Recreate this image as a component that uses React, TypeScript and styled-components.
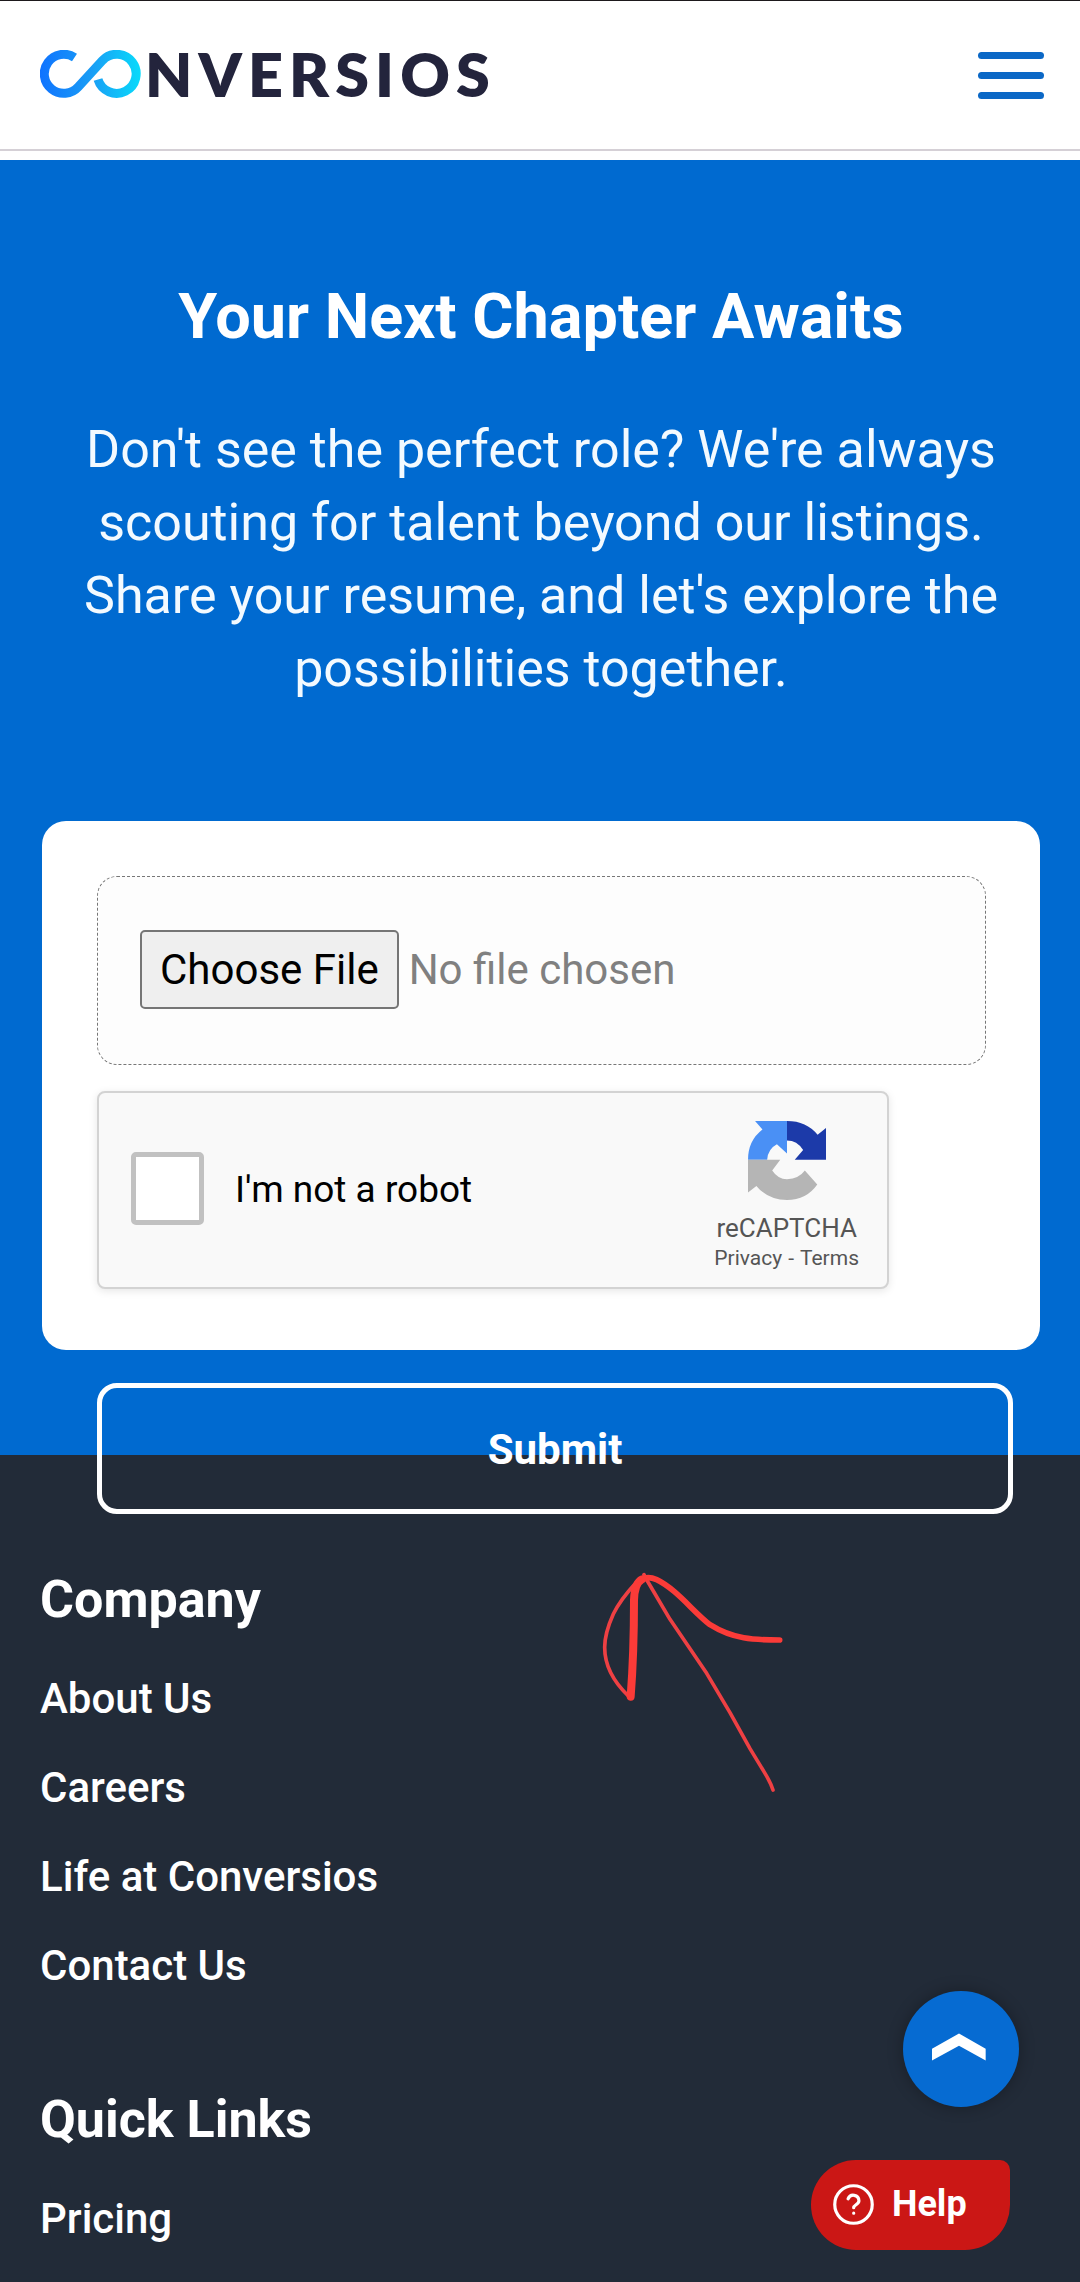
import React from "react";
import styled, { createGlobalStyle } from "styled-components";

const blue = "#006ad0";
const navy = "#222b38";

const GlobalStyle = createGlobalStyle`
  *, *::before, *::after { box-sizing: border-box; }
  body { margin: 0; background: #fff; font-family: Roboto, "Liberation Sans", sans-serif; }
  h2, h3, p, ul { margin: 0; padding: 0; }
  a { color: inherit; text-decoration: none; }
  button { font-family: inherit; cursor: pointer; }
`;

const Page = styled.div`
  position: relative;
  display: flex;
  flex-direction: column;
  min-height: 100vh;
`;

const Header = styled.header`
  display: flex;
  align-items: center;
  justify-content: space-between;
  height: 151px;
  margin-bottom: 9px;
  padding: 0 36px 0 40px;
  border-top: 1px solid #1d191c;
  border-bottom: 2px solid #d5d0d6;
`;

const Logo = styled.a`
  display: flex;
  align-items: center;
  gap: 3px;
  color: #23243c;
  font: 800 61px/64px Lato, sans-serif;
  letter-spacing: 0.1em;
`;

const LogoText = styled.span`
  padding-bottom: 2px;
`;

const MenuButton = styled.button`
  display: grid;
  gap: 13px;
  width: 66px;
  padding: 0;
  border: 0;
  background: none;
`;

const MenuBar = styled.span`
  height: 7px;
  border-radius: 4px;
  background: #0b68c6;
`;

const Hero = styled.main`
  padding: 117px 40px 0 42px;
  background: ${blue};
`;

const HeroTitle = styled.h2`
  color: #fff;
  font-size: 63px;
  font-weight: 700;
  line-height: 80px;
  text-align: center;
`;

const HeroText = styled.p`
  margin: 56px 30px 116px;
  color: #f3faff;
  font-size: 52px;
  line-height: 73px;
  text-align: center;
`;

const Card = styled.div`
  padding: 55px 54px 61px 55px;
  border-radius: 24px;
  background: #fff;
`;

const FileBox = styled.label`
  display: flex;
  align-items: center;
  height: 189px;
  margin-bottom: 26px;
  padding: 0 42px 2px;
  border: 1px dashed #777;
  border-radius: 20px;
  background: #fdfdfd;
`;

const FileInput = styled.input`
  width: 100%;
  color: #808080;
  font: 400 42px/48px Roboto, sans-serif;

  &::file-selector-button {
    height: 79px;
    margin: 0 10px 0 0;
    padding: 0 18px;
    border: 2px solid #757575;
    border-radius: 5px;
    background: #efefef;
    color: #000;
    font: inherit;
  }
`;

const Captcha = styled.div`
  display: flex;
  align-items: center;
  justify-content: space-between;
  max-width: 792px;
  height: 198px;
  padding: 0 28px 0 32px;
  border: 2px solid #d3d3d3;
  border-radius: 8px;
  background: #f9f9f9;
  box-shadow: 0 2px 8px rgba(0, 0, 0, 0.1);
`;

const RobotLabel = styled.label`
  display: flex;
  align-items: center;
  gap: 31px;
  padding-bottom: 3px;
  color: #000;
  font-size: 37px;
  line-height: 40px;
`;

const RobotCheck = styled.input`
  appearance: none;
  width: 73px;
  height: 73px;
  margin: 0;
  border: 5px solid #c1c1c1;
  border-radius: 5px;
  background: #fff;

  &:checked { background: #4a90f5; }
`;

const RobotText = styled.span`
  padding-top: 3px;
`;

const Brand = styled.div`
  display: flex;
  flex-direction: column;
  align-items: center;
  padding-top: 13px;
  color: #555;
`;

const BrandName = styled.span`
  margin-top: 12px;
  font-size: 26px;
  line-height: 32px;
`;

const BrandLinks = styled.span`
  display: flex;
  gap: 6px;
  font-size: 21px;
  line-height: 28px;
`;

const Submit = styled.button`
  position: relative;
  z-index: 1;
  display: block;
  width: calc(100% - 82px);
  height: 131px;
  margin: 33px 27px -59px 55px;
  padding: 2px 0 0;
  border: 5px solid #fff;
  border-radius: 20px;
  background: transparent;
  color: #fff;
  font-size: 42px;
  font-weight: 700;
`;

const Footer = styled.footer`
  position: relative;
  display: flex;
  flex: 1;
  flex-direction: column;
  gap: 98px;
  padding: 113px 40px 38px;
  background: ${navy};
  color: #fff;
`;

const FooterTitle = styled.h3`
  margin-bottom: 43px;
  font-size: 52px;
  font-weight: 700;
  line-height: 64px;
`;

const LinkList = styled.ul`
  display: grid;
  gap: 41px;
  list-style: none;
  font-size: 42px;
  font-weight: 500;
  line-height: 48px;
`;

const Sketch = styled.svg`
  position: absolute;
  top: 85px;
  left: 560px;
  pointer-events: none;
`;

const TopButton = styled.button`
  position: fixed;
  right: 61px;
  bottom: 175px;
  display: grid;
  place-items: center;
  width: 116px;
  height: 116px;
  padding: 0 4px 4px 0;
  border: 0;
  border-radius: 50%;
  background: #066bd2;
  box-shadow: 0 0 16px rgba(0, 0, 0, 0.3);
`;

const HelpButton = styled.button`
  position: fixed;
  right: 70px;
  bottom: 32px;
  display: flex;
  align-items: center;
  gap: 16px;
  width: 199px;
  height: 90px;
  padding: 0 0 2px 20px;
  border: 0;
  border-radius: 45px 10px 45px 45px;
  background: #cb1715;
  color: #fff;
  font-size: 36px;
  font-weight: 700;
  line-height: 40px;
`;

const sections = [
  { title: "Company", links: ["About Us", "Careers", "Life at Conversios", "Contact Us"] },
  { title: "Quick Links", links: ["Pricing"] },
];

const InfinityMark = () => (
  <svg width="102" height="50" viewBox="0 0 102 50" fill="none" aria-hidden="true">
    <defs>
      <linearGradient id="mark" x1="0" y1="0" x2="102" y2="0" gradientUnits="userSpaceOnUse">
        <stop stopColor="#0f73ff" />
        <stop offset="0.5" stopColor="#1a9df5" />
        <stop offset="1" stopColor="#08dcfb" />
      </linearGradient>
    </defs>
    <path
      d="M34.5 7.5A19.5 19.5 0 1 0 38.4 36.7L62.6 10.3A19.5 19.5 0 1 1 58 29.5"
      stroke="url(#mark)"
      strokeWidth="9"
    />
  </svg>
);

const CaptchaMark = () => (
  <svg width="78" height="79" viewBox="256 157 232 235" aria-hidden="true">
    <path fill="#4a90f5" d="M372 157H277L299 182Q256 215 256 272H313Q315 240 342 226L372 254Z" />
    <path fill="#1c3aa9" d="M372 157Q430 157 463 198L488 178V272H395L420 243Q402 215 372 215Z" />
    <path
      fill="#b5b5b5"
      d="M256 272H352L328 304Q345 330 372 330Q408 328 425 304L462 346Q430 392 372 392Q315 392 281 350L256 370Z"
    />
  </svg>
);

export default function App() {
  return (
    <Page>
      <GlobalStyle />
      <Header>
        <Logo href="#" aria-label="Conversios">
          <InfinityMark />
          <LogoText>NVERSIOS</LogoText>
        </Logo>
        <MenuButton type="button" aria-label="Menu">
          <MenuBar />
          <MenuBar />
          <MenuBar />
        </MenuButton>
      </Header>

      <Hero>
        <HeroTitle>Your Next Chapter Awaits</HeroTitle>
        <HeroText>
          Don't see the perfect role? We're always scouting for talent beyond our listings. Share
          your resume, and let's explore the possibilities together.
        </HeroText>
        <form onSubmit={(event) => event.preventDefault()}>
          <Card>
            <FileBox htmlFor="resume">
              <FileInput id="resume" type="file" aria-label="Resume" />
            </FileBox>
            <Captcha>
              <RobotLabel htmlFor="robot">
                <RobotCheck id="robot" type="checkbox" />
                <RobotText>I'm not a robot</RobotText>
              </RobotLabel>
              <Brand>
                <CaptchaMark />
                <BrandName>reCAPTCHA</BrandName>
                <BrandLinks>
                  <a href="#privacy">Privacy</a>
                  <span>-</span>
                  <a href="#terms">Terms</a>
                </BrandLinks>
              </Brand>
            </Captcha>
          </Card>
          <Submit type="submit">Submit</Submit>
        </form>
      </Hero>

      <Footer>
        {sections.map((section) => (
          <nav key={section.title} aria-label={section.title}>
            <FooterTitle>{section.title}</FooterTitle>
            <LinkList>
              {section.links.map((link) => (
                <li key={link}>
                  <a href="#">{link}</a>
                </li>
              ))}
            </LinkList>
          </nav>
        ))}
        <Sketch
          width="280"
          height="280"
          viewBox="0 0 840 840"
          fill="none"
          stroke="#fb3b38"
          strokeLinecap="round"
          strokeLinejoin="round"
          aria-hidden="true"
        >
          <path stroke="#ee4043" strokeWidth="11" d="M252 104L264 126L330 238L440 400L510 518L570 626L615 700Q632 728 639 750" />
          <path stroke="#ee4043" strokeWidth="11" d="M228 128Q180 180 160 222Q134 280 134 322Q134 400 205 468" />
          <path strokeWidth="24" d="M212 470Q222 340 222 180Q224 128 246 118" />
          <path strokeWidth="17" d="M240 120Q262 106 290 119C350 148 400 216 450 254C520 298 580 300 659 300" />
        </Sketch>
      </Footer>

      <TopButton type="button" aria-label="Back to top">
        <svg width="54" height="28" viewBox="456 220 160 82" aria-hidden="true">
          <path fill="#fff" d="M456 266L536 221L615 266V301L536 257L456 301Z" />
        </svg>
      </TopButton>
      <HelpButton type="button">
        <svg
          width="45"
          height="45"
          viewBox="0 0 24 24"
          fill="none"
          stroke="#fff"
          strokeWidth="1.7"
          strokeLinecap="round"
          strokeLinejoin="round"
          aria-hidden="true"
        >
          <circle cx="12" cy="12" r="10" />
          <path d="M9.1 9a3 3 0 0 1 5.8 1c0 2-2.8 2.2-2.8 3.7M12.1 16.6h.01" />
        </svg>
        Help
      </HelpButton>
    </Page>
  );
}
